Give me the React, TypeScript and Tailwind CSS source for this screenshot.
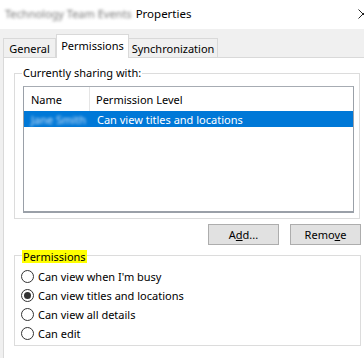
import React from "react";

const font = { fontFamily: '"Noto Sans", "Liberation Sans", sans-serif' };

function Radio({ label, checked }: { label: string; checked?: boolean }) {
  return (
    <div className="flex h-[19px] items-center gap-[4px]">
      <span className="flex h-[13px] w-[13px] items-center justify-center rounded-full border border-[#333333] bg-white">
        {checked && <span className="h-[7px] w-[7px] rounded-full bg-[#333333]" />}
      </span>
      <span>{label}</span>
    </div>
  );
}

export default function App() {
  return (
    <div
      className="relative h-[358px] w-[364px] overflow-hidden bg-[#f0f0f0] text-[11px] leading-none text-black"
      style={font}
    >
      {/* title bar */}
      <div className="relative flex h-[29px] items-center bg-white pl-[5px] pb-[2px]">
        <span className="mr-[4px] select-none whitespace-nowrap text-[#777777] blur-[1.4px]">Technology Team Events</span>
        <span className="text-[11.5px]">Properties</span>
        <svg className="absolute right-[-4px] top-[9px]" width="10" height="10" viewBox="0 0 10 10">
          <path d="M0.5 0.5 L9.5 9.5 M9.5 0.5 L0.5 9.5" stroke="#222" strokeWidth="1" />
        </svg>
      </div>

      {/* tabs */}
      <div className="flex h-[28px] items-end pl-[3px]">
        <div className="flex h-[19px] w-[53px] items-center justify-center border border-b-0 border-[#d9d9d9] bg-[#f0f0f0]">
          General
        </div>
        <div className="relative z-10 -mb-px flex h-[24px] w-[73px] items-start justify-center border border-b-0 border-[#d9d9d9] bg-white pt-[5px]">
          Permissions
        </div>
        <div className="flex h-[19px] w-[89px] items-center justify-center border border-b-0 border-l-0 border-[#d9d9d9] bg-[#f0f0f0]">
          Synchronization
        </div>
      </div>

      {/* panel */}
      <div className="ml-[3px] h-[301px] border-l border-t border-[#d9d9d9] bg-white pt-[15px]">
        {/* sharing group */}
        <div className="relative ml-[10px] h-[146px] w-[346px] border border-[#dcdcdc]">
          <span className="absolute left-[7px] top-[-7px] bg-white px-[1px]">Currently sharing with:</span>
          <div className="ml-[8px] mt-[12px] h-[127px] w-[331px] border border-b-2 border-[#9aa0a8] border-t-[#a7acb3] bg-white">
            <div className="flex h-[24px] items-center">
              <div className="flex h-full w-[66px] items-center border-r border-[#e5e5e5] pl-[7px]">Name</div>
              <div className="pl-[6px]">Permission Level</div>
            </div>
            <div className="flex h-[16px] items-center bg-[#0078d7] text-white">
              <div className="flex w-[67px] items-center pl-[7px]">
                <span className="select-none whitespace-nowrap text-[#cfe3f7] blur-[1.4px]">Jane Smith</span>
              </div>
              <div className="pl-[6px]">Can view titles and locations</div>
            </div>
          </div>
        </div>

        {/* buttons */}
        <div className="mt-[5px] flex gap-[11px] pl-[204px]">
          <button className="flex h-[21px] w-[71px] items-center justify-center border border-[#adadad] bg-[#e1e1e1]">
            A<span className="underline">d</span>d...
          </button>
          <button className="flex h-[21px] w-[71px] items-center justify-center border border-[#adadad] bg-[#e1e1e1]">
            Remo<span className="underline">v</span>e
          </button>
        </div>

        {/* permissions group */}
        <div className="relative ml-[10px] mt-[10px] h-[91px] w-[347px] border border-[#dcdcdc] pl-[6px] pt-[11px]">
          <span className="absolute left-[7px] top-[-6px] bg-[#ffff00] px-[1px] py-[1px]">Permissions</span>
          <Radio label="Can view when I'm busy" />
          <Radio label="Can view titles and locations" checked />
          <Radio label="Can view all details" />
          <Radio label="Can edit" />
        </div>
      </div>
    </div>
  );
}
